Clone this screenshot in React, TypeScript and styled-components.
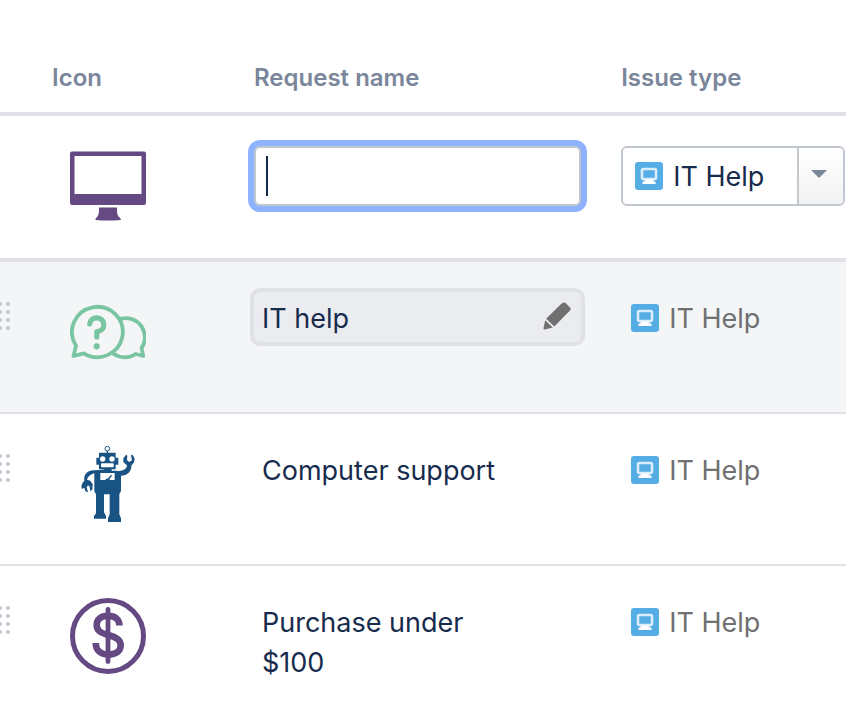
import React from 'react';
import styled, { createGlobalStyle } from 'styled-components';

const GlobalStyle = createGlobalStyle`
  *, *::before, *::after { box-sizing: border-box; }
  body {
    margin: 0;
    background: #fff;
    color: #172b4d;
    font-family: Inter, 'Liberation Sans', sans-serif;
    font-size: 27px;
    line-height: 40px;
    overflow-x: hidden;
  }
`;

const Table = styled.table`
  width: 100%;
  table-layout: fixed;
  border-collapse: separate;
  border-spacing: 0;
`;

const DragCol = styled.col`
  width: 24px;
`;

const IconCol = styled.col`
  width: 216px;
`;

const TypeCol = styled.col`
  width: 28%;
`;

const HeadCell = styled.th<{ $indent: number }>`
  height: 116px;
  padding: 44px 0 0 ${p => p.$indent}px;
  border-bottom: 4px solid #dfe1e6;
  color: #7a869a;
  font-size: 24px;
  font-weight: 600;
  text-align: left;
`;

const Row = styled.tr<{ $hovered?: boolean; $creating?: boolean }>`
  background: ${p => (p.$hovered ? '#f4f5f7' : '#fff')};

  > td {
    height: ${p => (p.$creating ? 146 : 152)}px;
    border-bottom: ${p => (p.$creating ? 4 : 2)}px solid #dfe1e6;
    vertical-align: top;
  }
`;

const DragCell = styled.td`
  padding: 40px 0 0;
`;

const DragHandle = styled.button`
  display: block;
  width: 10px;
  padding: 0;
  border: 0;
  background: none;
  cursor: grab;

  svg { display: block; }
`;

const IconCell = styled.td`
  padding: 32px 0 0 46px;

  svg { display: block; }
`;

const NameCell = styled.td`
  padding: 26px 24px 0 10px;
`;

const TypeCell = styled.td`
  padding: 30px 1px 0 12px;
`;

const InputFrame = styled.div`
  position: relative;
  padding: 4px;
`;

const NameInput = styled.input`
  display: block;
  width: 100%;
  height: 60px;
  padding: 0 10px;
  border: 2px solid #c1c7d0;
  border-radius: 6px;
  outline: none;
  box-shadow: 0 0 0 6px #8fb2ff;
  color: #172b4d;
  caret-color: transparent;
  font: inherit;
`;

const Caret = styled.span`
  position: absolute;
  top: 14px;
  left: 16px;
  width: 2px;
  height: 40px;
  background: #172b4d;
`;

const EditableName = styled.button`
  display: flex;
  align-items: center;
  justify-content: space-between;
  width: 100%;
  height: 58px;
  padding: 4px 10px 0 8px;
  border: 4px solid #dfe1e6;
  border-radius: 10px;
  background: #ebecf0;
  color: #172b4d;
  font: inherit;
`;

const NameText = styled.div`
  max-width: 260px;
  padding: 11px 0 0 12px;
`;

const TypeLabel = styled.div`
  display: flex;
  align-items: center;
  gap: 10px;
  padding: 7px 0 0 10px;
  color: #707070;

  svg { margin-bottom: 2px; }
`;

const SelectFrame = styled.div`
  position: relative;
  display: flex;
  height: 60px;
  border: 2px solid #c1c7d0;
  border-radius: 6px;
  overflow: hidden;
`;

const SelectIcon = styled.span`
  position: absolute;
  top: 14px;
  left: 12px;
  pointer-events: none;

  svg { display: block; }
`;

const TypeSelect = styled.select`
  flex: 1;
  min-width: 0;
  padding: 2px 0 0 50px;
  border: 0;
  outline: none;
  appearance: none;
  background: #fff;
  color: #172b4d;
  font: inherit;
`;

const SelectArrow = styled.span`
  display: flex;
  align-items: center;
  justify-content: center;
  width: 46px;
  padding-right: 4px;
  border-left: 2px solid #c8c8cb;
  background: linear-gradient(#fff, #f2f2f2);
`;

const ChevronGlyph = () => (
  <svg width="16" height="12" viewBox="0 0 16 12" aria-hidden="true">
    <path d="M0 0H16L8 8Z" fill="#7a869a" />
  </svg>
);

const DotsIcon = () => (
  <svg width="10" height="28" viewBox="0 0 10 28" fill="#c1c7d0" aria-hidden="true">
    {[2, 10, 18, 26].map(y => (
      <g key={y}>
        <circle cx="0" cy={y} r="2" />
        <circle cx="8" cy={y} r="2" />
      </g>
    ))}
  </svg>
);

const HelpTypeIcon = () => (
  <svg width="28" height="28" viewBox="0 0 28 28" aria-hidden="true">
    <rect width="28" height="28" rx="3" fill="#55ade5" />
    <rect x="7" y="7" width="14" height="10" rx="1.5" fill="none" stroke="#d9eefa" strokeWidth="2.6" />
    <path d="M9.5 17.5H18.5V19.5H20.5V22H7.500V19.5H9.5Z" fill="#fff" />
  </svg>
);

const PencilIcon = () => (
  <svg width="28" height="34" viewBox="0 0 28 34" fill="#707070" aria-hidden="true">
    <path d="M17.8 2.2L19.800 .8Q21.500 0 22.800 1.300L27 5.500Q28.300 7 27 8.400L11.300 24.500L3.200 16.800Z" />
    <path d="M2.200 18.300L9.800 25.500L1.600 27.500Q.3 27.600 .5 26Z" />
  </svg>
);

const MonitorIcon = () => (
  <svg width="76" height="76" viewBox="0 0 76 76" fill="#654982" aria-label="Computer">
    <path
      fillRule="evenodd"
      d="M2 3.500H74Q76 3.500 76 5.500V55Q76 57 74 57H2Q0 57 0 55V5.500Q0 3.500 2 3.500ZM4.500 8V46H71.500V8Z"
    />
    <path d="M29 59.500H47C47 64 47 66 48.500 68.500Q51 70 51 72Q38 73 25.300 72Q25.300 70 27.500 68.500C29 66 29 64 29 59.500Z" />
  </svg>
);

const ChatIcon = () => (
  <svg
    width="76"
    height="76"
    viewBox="0 0 76 76"
    fill="none"
    stroke="#79c5a2"
    strokeWidth="3.8"
    strokeLinecap="round"
    strokeLinejoin="round"
    aria-label="Questions"
  >
    <path d="M6 51.600A25.400 25.200 0 1 1 13.800 59.300L3.500 62Z" />
    <path d="M51 24.600A19.400 19.200 0 0 1 71.600 54L73.200 62L65.800 60A20 20 0 0 1 43.500 59.800" />
    <path d="M19.700 30C20 26 23 23.800 26.800 23.800C31 23.800 33.800 27 33.800 30.900C33.800 35 30.600 37.300 26.800 37.600V43" strokeWidth="5.2" />
    <circle cx="26.700" cy="52.300" r="3.1" fill="#79c5a2" stroke="none" />
  </svg>
);

const RobotIcon = () => (
  <svg width="76" height="76" viewBox="30 33 228 228" fill="#185384" aria-label="Robot">
    <circle cx="142" cy="41" r="7" fill="none" stroke="#185384" strokeWidth="3" />
    <path d="M140 48H144V53H167V68H175V89H167V103H155V107H168C186 110 200 104 201 91L190 81V70L198 59L202 62L201 75L207 81L216 76L213 61L218 59L224 71L222 82L214 92C214 111 202 121 183 122V168L178 178V238L183 250V261H144V250L149 238V178H132V232L138 243V251H102V243L108 235V178L103 169V115C91 118 83 125 81 134L91 137L98 148L97 164L91 168L89 155L84 151L80 157L84 172L76 169L73 158L66 162L64 154L67 145L73 137C70 119 82 105 103 106L131 104V103H117V89H109V68H117V53H140Z" />
    <g fill="#fff">
      <circle cx="128" cy="72" r="8" />
      <circle cx="156" cy="72" r="8" />
      <rect x="123" y="85" width="38" height="12" rx="3" />
      <rect x="121" y="114" width="43" height="21" />
    </g>
    <path d="M135 135Q142 126 151 135ZM142 133L153 119L156 122L147 134Z" />
  </svg>
);

const DollarIcon = () => (
  <svg width="76" height="76" viewBox="0 0 76 76" fill="none" stroke="#654982" aria-label="Purchase">
    <circle cx="38" cy="38" r="35.500" strokeWidth="5" />
    <path d="M38 11.500V63.500" strokeWidth="4.800" strokeLinecap="round" />
    <path
      d="M49.400 27.500C49.400 21 45 17.900 38 17.900C31 17.900 26.700 21.500 26.700 27C26.700 33 31 35 38 37C46 39.200 50.700 41.500 50.700 47.300C50.700 53 46 56.500 38.300 56.500C30.500 56.500 25.700 52 25.700 45"
      strokeWidth="6.600"
    />
  </svg>
);

const Drag = () => (
  <DragCell>
    <DragHandle type="button" aria-label="Reorder">
      <DotsIcon />
    </DragHandle>
  </DragCell>
);

const IssueType = () => (
  <TypeCell>
    <TypeLabel>
      <HelpTypeIcon />
      IT Help
    </TypeLabel>
  </TypeCell>
);

export default function App() {
  return (
    <>
      <GlobalStyle />
      <Table>
        <colgroup>
          <DragCol />
          <IconCol />
          <col />
          <TypeCol />
        </colgroup>
        <thead>
          <tr>
            <HeadCell colSpan={2} $indent={52}>Icon</HeadCell>
            <HeadCell $indent={14}>Request name</HeadCell>
            <HeadCell $indent={12}>Issue type</HeadCell>
          </tr>
        </thead>
        <tbody>
          <Row $creating>
            <DragCell />
            <IconCell><MonitorIcon /></IconCell>
            <NameCell>
              <InputFrame>
                <NameInput type="text" aria-label="Request name" />
                <Caret />
              </InputFrame>
            </NameCell>
            <TypeCell>
              <SelectFrame>
                <TypeSelect aria-label="Issue type" defaultValue="IT Help">
                  <option>IT Help</option>
                </TypeSelect>
                <SelectArrow><ChevronGlyph /></SelectArrow>
                <SelectIcon><HelpTypeIcon /></SelectIcon>
              </SelectFrame>
            </TypeCell>
          </Row>
          <Row $hovered>
            <Drag />
            <IconCell><ChatIcon /></IconCell>
            <NameCell>
              <EditableName type="button">
                IT help
                <PencilIcon />
              </EditableName>
            </NameCell>
            <IssueType />
          </Row>
          <Row>
            <Drag />
            <IconCell><RobotIcon /></IconCell>
            <NameCell><NameText>Computer support</NameText></NameCell>
            <IssueType />
          </Row>
          <Row>
            <Drag />
            <IconCell><DollarIcon /></IconCell>
            <NameCell><NameText>Purchase under $100</NameText></NameCell>
            <IssueType />
          </Row>
        </tbody>
      </Table>
    </>
  );
}
